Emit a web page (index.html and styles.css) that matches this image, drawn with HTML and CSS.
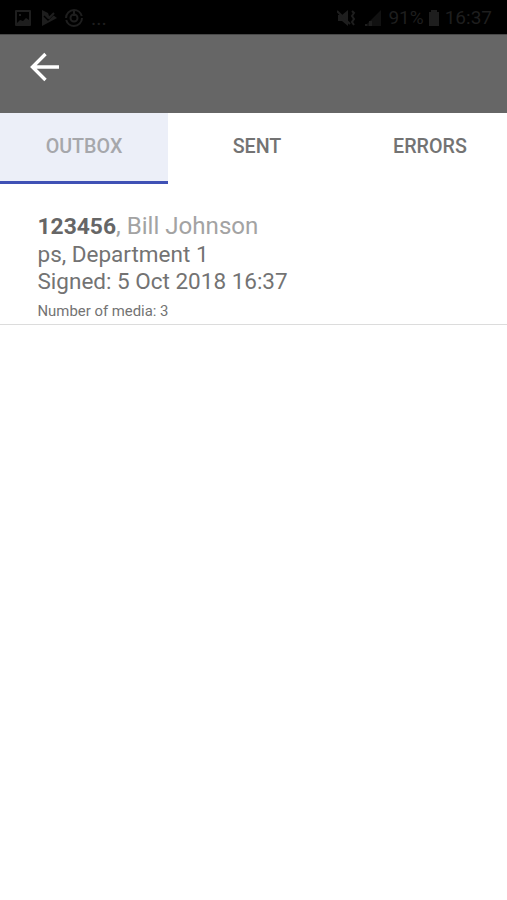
FILE: index.html
```html
<!DOCTYPE html>
<html lang="en">
<head>
  <meta charset="UTF-8">
  <meta name="viewport" content="width=device-width, initial-scale=1.0">
  <title>Outbox</title>
  <link rel="stylesheet" href="styles.css">
</head>
<body>

  <div class="status-bar">
    <div class="status-left">
      <svg class="icon-picture" width="18" height="18" viewBox="0 0 18 18">
        <path fill="currentColor" fill-rule="evenodd" d="M2 1h14q1 0 1 1v14q0 1-1 1H2q-1 0-1-1V2q0-1 1-1zM3 3v11l3-3 3 1 3-3 3 2V3zM5 5h2v2H5z"/>
      </svg>
      <svg class="icon-play" width="17" height="18" viewBox="0 0 17 18">
        <path fill="currentColor" d="M1 1l6 3 1 3 4-1 4 3L1 17z"/>
        <path fill="none" stroke="#000" stroke-width="1.5" d="M3 7l4 4 7-7"/>
        <path fill="none" stroke="currentColor" stroke-width="2" d="M5 6l3 3 5-5"/>
      </svg>
      <svg class="icon-circle" width="20" height="20" viewBox="0 0 20 20" fill="none" stroke="currentColor" stroke-width="2">
        <circle cx="10" cy="10" r="8" stroke-dasharray="23 2"/>
        <circle cx="10" cy="10" r="3.5"/>
        <path d="M10 2v6"/>
      </svg>
      <span class="more">...</span>
    </div>
    <div class="status-right">
      <svg class="icon-mute" width="19" height="18" viewBox="0 0 19 18">
        <path fill="currentColor" d="M1 6h4l6-5v16l-6-5H1z"/>
        <path fill="none" stroke="currentColor" stroke-width="2" d="M0 2l13 13M15 2l2 2-2 3 2 3-2 3 2 3"/>
      </svg>
      <svg class="icon-signal" width="18" height="18" viewBox="0 0 18 18">
        <path fill="#111" d="M17 1v16H1z"/>
        <path fill="currentColor" d="M1 15h2v2H1zM5 12h3v5H5z"/>
      </svg>
      <span class="battery-text">91%</span>
      <svg class="icon-battery" width="12" height="18" viewBox="0 0 12 18">
        <path fill="currentColor" d="M3 1h6v2h2v14H1V3h2z"/>
      </svg>
      <span class="clock">16:37</span>
    </div>
  </div>

  <header class="toolbar">
    <svg class="back" width="30" height="30" viewBox="0 0 30 30">
      <path fill="none" stroke="#fff" stroke-width="3.4" d="M29 15H3M15.5 2L2.5 15l13 13"/>
    </svg>
  </header>

  <nav class="tabs">
    <a class="tab active">OUTBOX</a>
    <a class="tab">SENT</a>
    <a class="tab">ERRORS</a>
  </nav>

  <main class="list">
    <div class="item">
      <div class="name"><b>123456</b>, Bill Johnson</div>
      <div class="line">ps, Department 1</div>
      <div class="line">Signed: 5 Oct 2018 16:37</div>
      <div class="media">Number of media: 3</div>
    </div>
  </main>

</body>
</html>
```

FILE: styles.css
```css
body {
  margin: 0;
  background-color: #fff;
  color: #737373;
  font-family: Roboto, "Liberation Sans", sans-serif;
}
.status-bar {
  display: flex;
  justify-content: space-between;
  height: 34px;
  padding: 0 15px 0 14px;
  background-color: #000;
  color: #1e1e1e;
}
.status-left,
.status-right {
  display: flex;
  align-items: center;
  padding-top: 1px;
}
.icon-play {
  margin-left: 9px;
}
.icon-circle {
  margin-left: 6px;
}
.more {
  margin-left: 7px;
  font-size: 20px;
}
.icon-signal {
  margin-left: 8px;
}
.battery-text {
  margin-left: 6px;
  font-size: 19px;
}
.icon-battery {
  margin: 0 5px 0 4px;
}
.clock {
  font-size: 19px;
}
.toolbar {
  height: 79px;
  box-sizing: border-box;
  padding: 17px 30px 0;
  border-top: 1px solid #484848;
  background-color: #666;
}
.back {
  display: block;
}
.tabs {
  display: grid;
  grid-template-columns: repeat(3, 168px);
  column-gap: 5px;
  height: 71px;
  overflow: hidden;
}
.tab {
  box-sizing: border-box;
  padding-top: 22px;
  border-bottom: 3px solid transparent;
  text-align: center;
  font-size: 19.7px;
  line-height: 24px;
  font-weight: 500;
}
.tab.active {
  background-color: #eceff8;
  border-bottom-color: #3f51b5;
  color: #a6a7ab;
}
.item {
  height: 141px;
  box-sizing: border-box;
  padding: 28px 37.5px 0;
  border-bottom: 1px solid #dcdcdc;
}
.name {
  font-size: 24.1px;
  line-height: 29px;
  color: #a3a3a3;
}
.name b {
  font-size: 22.8px;
  color: #666;
}
.line {
  font-size: 22.5px;
  line-height: 27px;
}
.media {
  margin-top: 6px;
  font-size: 14.9px;
  line-height: 20px;
}
```
